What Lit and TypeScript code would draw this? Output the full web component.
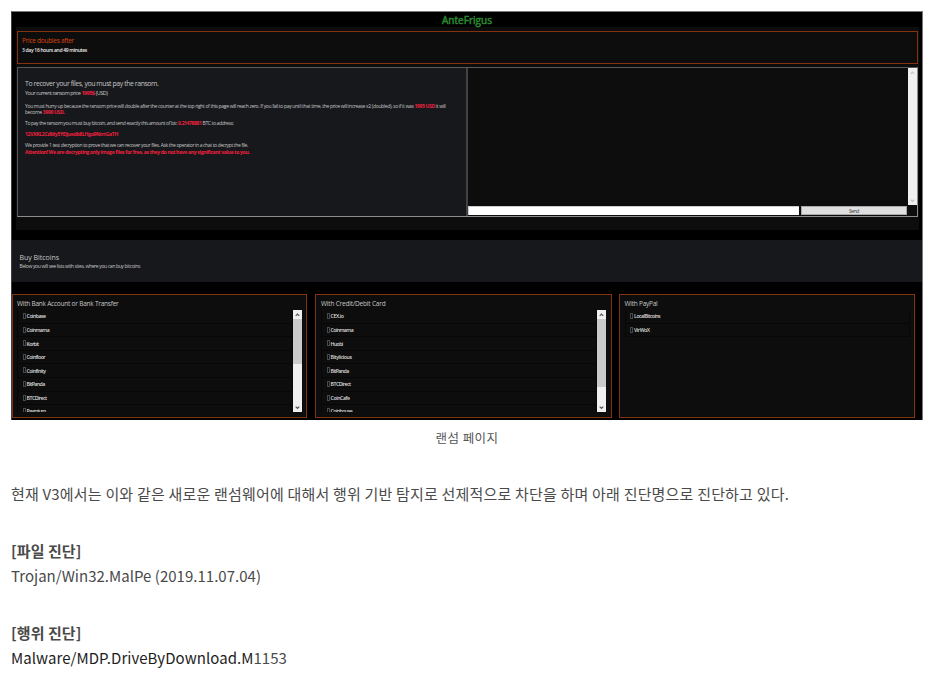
import { LitElement, html, css } from "lit";
import { customElement, property, query } from "lit/decorators.js";

/** One line of text, tracked so that it fills a given measure. */
@customElement("fit-line")
class FitLine extends LitElement {
  @property({ type: Number }) measure = 0;
  @query("span") private line!: HTMLSpanElement;

  static styles = css`
    :host { display: block; white-space: nowrap; }
  `;

  firstUpdated() {
    const chars = (this.textContent ?? "").trim().length;
    const natural = this.line.getBoundingClientRect().width;
    if (chars && this.measure) {
      this.line.style.letterSpacing = `${(this.measure - natural) / chars}px`;
    }
  }

  render() {
    return html`<span><slot></slot></span>`;
  }
}

@customElement("scroll-track")
class ScrollTrack extends LitElement {
  @property({ type: Number }) thumb = 0;
  @property({ type: Boolean, reflect: true }) idle = false;

  static styles = css`
    :host { display: flex; flex-direction: column; width: 9px; background: #f0f0f0; color: #555; }
    :host([idle]) { color: #c4c4c4; }
    svg { width: 9px; height: 9px; flex: none; fill: none; stroke: currentColor; stroke-width: 1.2; }
    .thumb { background: #cbcbcb; }
    .rest { flex: 1; }
  `;

  render() {
    return html`
      <svg viewBox="0 0 9 9"><path d="M2.7 5.9 4.5 4.1 6.3 5.9" /></svg>
      <div class="thumb" style="height:${this.thumb}px"></div>
      <div class="rest"></div>
      <svg viewBox="0 0 9 9"><path d="M2.7 3.6 4.5 5.4 6.3 3.6" /></svg>
    `;
  }
}

type Site = [name: string, measure: number];
interface Market { title: string; measure: number; kind: string; thumb: number; sites: Site[] }

const MARKETS: Market[] = [
  {
    title: "With Bank Account or Bank Transfer", measure: 101.5, kind: "bank", thumb: 45,
    sites: [["Coinbase", 19], ["Coinmama", 22.5], ["Korbit", 12], ["Coinfloor", 18.5], ["Coinfinity", 19], ["BitPanda", 18], ["BTCDirect", 20], ["Paymium", 19]],
  },
  {
    title: "With Credit/Debit Card", measure: 64.5, kind: "card", thumb: 68,
    sites: [["CEX.io", 13], ["Coinmama", 22.5], ["Huobi", 12], ["Bitylicious", 21], ["BitPanda", 18], ["BTCDirect", 20], ["CoinCafe", 19], ["Coinhouse", 21.5]],
  },
  {
    title: "With PayPal", measure: 33, kind: "paypal", thumb: 0,
    sites: [["LocalBitcoins", 26], ["VirWoX", 15.5]],
  },
];

@customElement("app-root")
class AppRoot extends LitElement {
  static styles = css`
    :host { display: block; width: 928px; height: 686px; overflow: hidden; background: #fff; }
    * { box-sizing: border-box; }
    .shot {
      margin: 11px 0 0 11px; width: 912px; height: 409px; background: #000; color: #c6c6c6;
      border: 1px solid #77797b; border-left-color: #3e3f40; border-bottom: 0;
      font: 5px/6.5px "Open Sans", "Noto Sans", sans-serif; overflow: hidden;
    }
    .brand { height: 15px; display: flex; justify-content: center; color: #2a8a30; font-size: 10px; line-height: 16px; -webkit-text-stroke: .5px #2a8a30; }
    .portal { margin: 0 3px 0 4px; height: 203px; padding: 4px 1px 0; background: #0d0d0d; }
    .timer { height: 33px; border: 1px solid #853210; padding: 5px 4px; color: #ececec; font-weight: 600; }
    .timer .label { color: #dc450c; font-size: 6.5px; line-height: 8px; font-weight: 400; margin-bottom: 2px; }
    .main { margin-top: 3px; height: 150px; display: flex; border: 1px solid #8b8c8e; border-top-color: #59595b; border-left-color: #59595b; }
    .note { width: 450px; background: #17181c; border-right: 2px solid #424245; padding: 11.4px 7px 0; }
    .note .head { font-size: 6.9px; line-height: 9px; }
    .price { font-size: 5.5px; line-height: 9px; margin-top: .9px; }
    .gap { margin-top: 4.5px; }
    .red { color: #f0203e; font-weight: 700; }
    .chat { flex: 1; display: flex; flex-direction: column; background: #0d0d0d; }
    .log { height: 137px; display: flex; justify-content: flex-end; }
    .log scroll-track { height: 137px; }
    .entry { display: flex; gap: 2px; padding-top: 1px; }
    .field { width: 331px; height: 9px; background: #fff; border: 1px solid #ccc; border-width: 1px 0 0 1px; }
    .send { width: 106px; height: 9px; display: flex; justify-content: center; background: #dfdfdf; border: 1px solid #aaa; color: #333; line-height: 8px; }
    .buy { margin-top: 10px; height: 42px; background: #17181c; padding: 13px 7.5px; }
    .buy .head { font-size: 7px; line-height: 9px; margin-bottom: .5px; }
    .cards { margin-top: 12px; display: flex; }
    .market { height: 124px; border: 1px solid #853210; background: #0d0d0d; padding: 3.6px 4px 0; }
    .bank { width: 295px; margin-right: 8px; padding-left: 4px; }
    .card { width: 297px; margin-right: 7px; padding-left: 5px; padding-right: 5px; }
    .paypal { width: 296px; padding-left: 4.5px; }
    .market .title { font-size: 6.5px; line-height: 9px; height: 11.4px; }
    .list { display: flex; height: 102px; overflow: hidden; }
    .sites { flex: 1; }
    .site { height: 13.6px; display: flex; align-items: center; padding: .6px 0 0 4.6px; gap: 1px; border: solid #070707; border-width: 0 1px 1px; color: #ddd; font-size: 5.2px; font-weight: 600; }
    .glyph { width: 3px; height: 6px; border: 1px solid #484848; margin-top: -1px; }
    .article { color: #4a4a4a; font: 15px/25px "Noto Sans CJK KR", "Noto Sans", sans-serif; padding-left: 11px; }
    .caption { display: flex; justify-content: center; width: 912px; color: #555; font-size: 12.5px; line-height: 20px; margin: 8px 0 33px 5.5px; }
    .para { margin-bottom: 32px; }
    .bold { font-weight: 700; }
    .dark { color: #1d1d1d; }
    .diag { margin-bottom: 32px; }
  `;

  private market(m: Market) {
    return html`
      <section class="market ${m.kind}">
        <fit-line class="title" .measure=${m.measure}>${m.title}</fit-line>
        <div class="list">
          <div class="sites">
            ${m.sites.map(([name, w]) => html`
              <div class="site"><i class="glyph"></i><fit-line .measure=${w}>${name}</fit-line></div>`)}
          </div>
          ${m.thumb ? html`<scroll-track .thumb=${m.thumb}></scroll-track>` : ""}
        </div>
      </section>`;
  }

  render() {
    return html`
      <figure class="shot">
        <div class="brand"><fit-line .measure=${50}>AnteFrigus</fit-line></div>
        <div class="portal">
          <div class="timer">
            <fit-line class="label" .measure=${52}>Price doubles after</fit-line>
            <fit-line .measure=${65}>3 day 16 hours and 49 minutes</fit-line>
          </div>
          <div class="main">
            <div class="note">
              <fit-line class="head" .measure=${133.5}>To recover your files, you must pay the ransom.</fit-line>
              <fit-line class="price" .measure=${82.5}>Your current ransom price <span class="red">1995$</span> (USD)</fit-line>
              <fit-line class="gap" .measure=${420.5}>You must hurry up because the ransom price will double after the counter at the top right of this page will reach zero. If you fail to pay until that time, the price will increase x2 (doubled), so if it was <span class="red">1995 USD</span> it will</fit-line>
              <fit-line .measure=${39.5}>become <span class="red">3990 USD.</span></fit-line>
              <fit-line class="gap" .measure=${208.5}>To pay the ransom you must buy bitcoin, and send exactly this amount of btc <span class="red">0.21478881</span> BTC to address:</fit-line>
              <fit-line class="gap red" .measure=${93}>12VXKL2CdMy5YEijuedb8LHgo9NtrtGaTH</fit-line>
              <fit-line class="gap" .measure=${223}>We provide 1 test decryption to prove that we can recover your files. Ask the operator in a chat to decrypt the file.</fit-line>
              <fit-line class="red" .measure=${224.5}>Attention! We are decrypting only image files for free, as they do not have any significant value to you.</fit-line>
            </div>
            <div class="chat">
              <div class="log"><scroll-track idle></scroll-track></div>
              <div class="entry"><div class="field"></div><div class="send"><fit-line .measure=${10}>Send</fit-line></div></div>
            </div>
          </div>
        </div>
        <div class="buy">
          <fit-line class="head" .measure=${39.5}>Buy Bitcoins</fit-line>
          <fit-line .measure=${120.5}>Below you will see lists with sites, where you can buy bitcoins</fit-line>
        </div>
        <div class="cards">${MARKETS.map((m) => this.market(m))}</div>
      </figure>
      <div class="caption article"><fit-line .measure=${63}>랜섬 페이지</fit-line></div>
      <div class="article">
        <fit-line class="para" .measure=${778}>현재 V3에서는 이와 같은 새로운 랜섬웨어에 대해서 행위 기반 탐지로 선제적으로 차단을 하며 아래 진단명으로 진단하고 있다.</fit-line>
        <fit-line class="bold" .measure=${70.5}>[파일 진단]</fit-line>
        <fit-line class="diag" .measure=${250}>Trojan/Win32.MalPe (2019.11.07.04)</fit-line>
        <fit-line class="bold" .measure=${70.5}>[행위 진단]</fit-line>
        <fit-line .measure=${276}><span class="dark">Malware/MDP.DriveByDownload.M</span>1153</fit-line>
      </div>
    `;
  }
}
